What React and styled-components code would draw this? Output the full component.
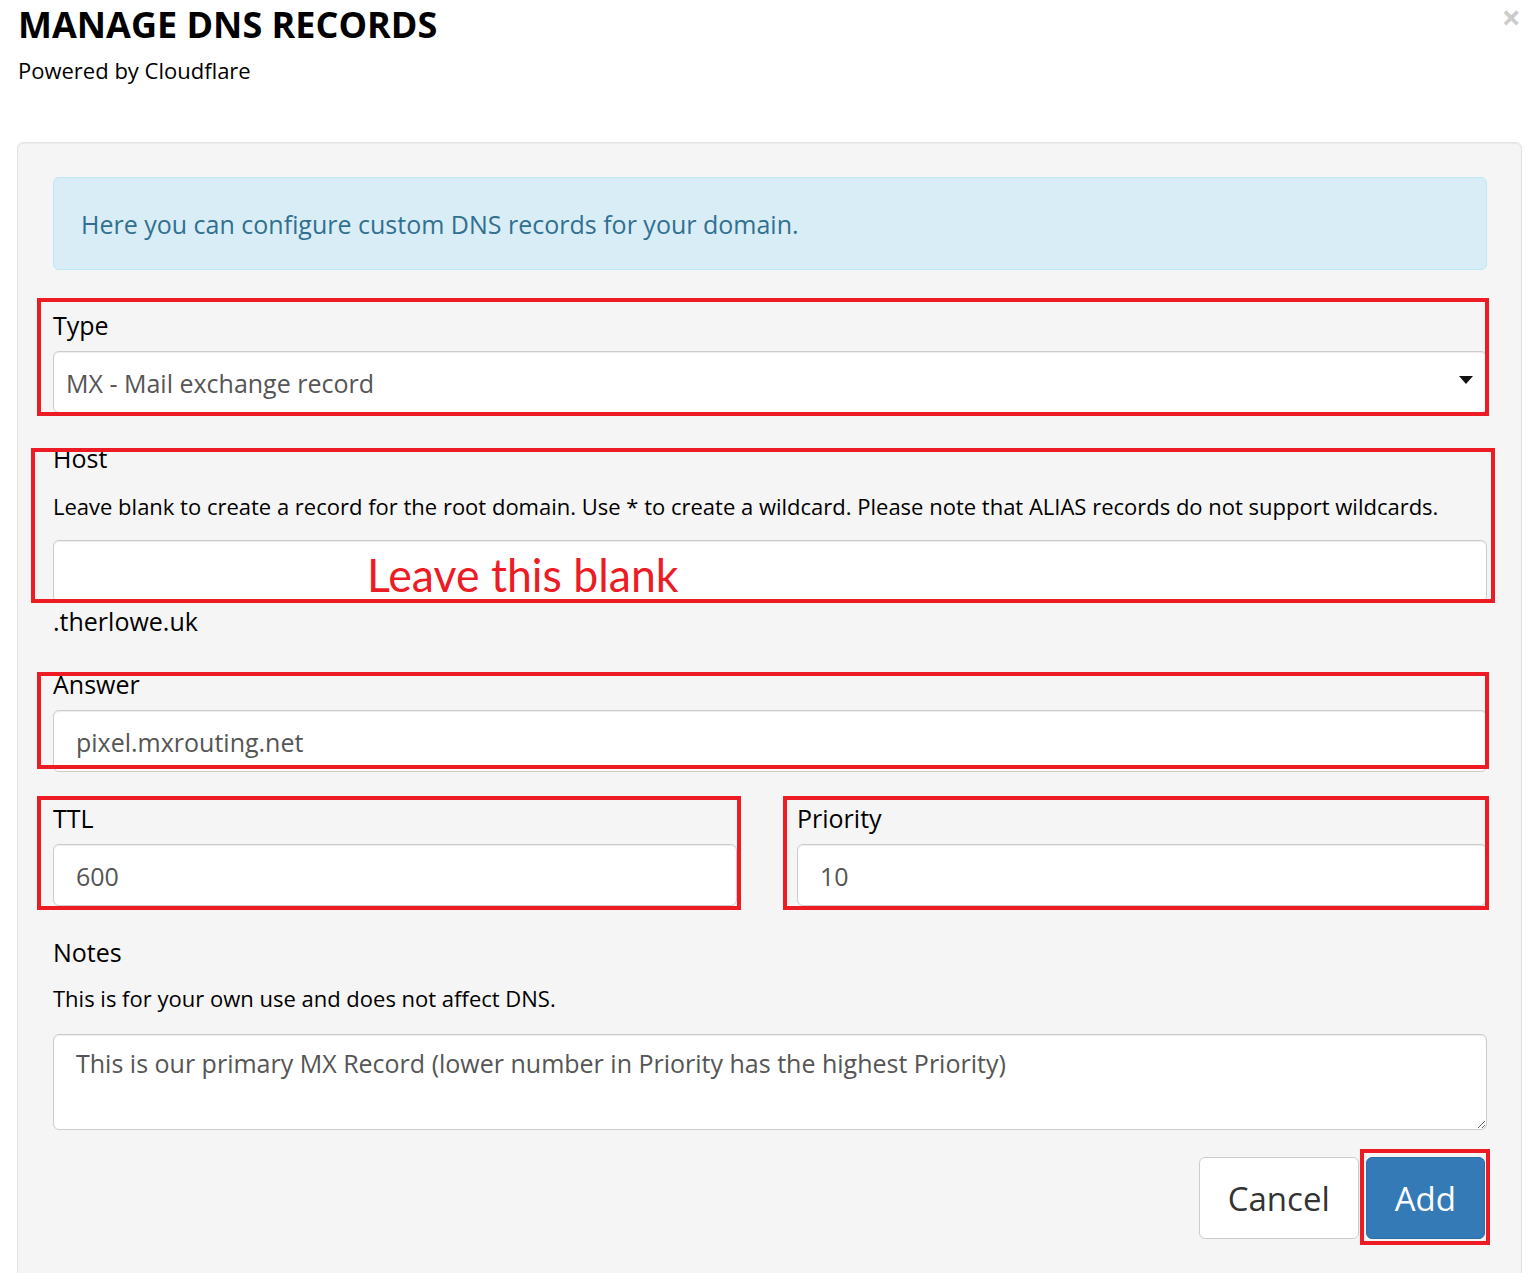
import React from "react";
import styled, { createGlobalStyle } from "styled-components";

const GlobalStyle = createGlobalStyle`
  html, body { margin: 0; padding: 0; background: #ffffff; }
  body { font-family: "Open Sans", "Noto Sans", sans-serif; color: #000; }
  *, *::before, *::after { box-sizing: border-box; }
`;

const Page = styled.div`
  width: 1526px;
  height: 1273px;
  overflow: hidden;
`;

const Header = styled.header`
  display: flex;
  justify-content: space-between;
  align-items: flex-start;
  height: 142px;
  padding: 0 5px 0 18px;
`;

const Title = styled.h1`
  margin: 0;
  padding-top: 2px;
  font-size: 36px;
  line-height: 46px;
  font-weight: 700;
  white-space: nowrap;
`;

const Subtitle = styled.p`
  margin: 7px 0 0;
  font-size: 22px;
  line-height: 30px;
`;

const CloseButton = styled.button`
  border: 0;
  background: none;
  padding: 0;
  margin-top: 0;
  font-family: inherit;
  font-size: 34px;
  font-weight: 700;
  line-height: 34px;
  color: #000;
  opacity: 0.2;
  cursor: pointer;
`;

const Well = styled.section`
  margin: 0 4px 0 17px;
  min-height: 1200px;
  background: #f5f5f5;
  border: 1px solid #e3e3e3;
  border-radius: 6px;
  box-shadow: inset 0 1px 1px rgba(0, 0, 0, 0.05);
  padding: 34px 34px 40px 35px;
`;

const Alert = styled.div`
  display: flex;
  align-items: center;
  height: 93px;
  margin-bottom: 39px;
  padding: 0 27px;
  background: #d9edf7;
  border: 1px solid #bce8f1;
  border-radius: 6px;
  color: #31708f;
  font-size: 25px;
`;

const FormGroup = styled.div`
  position: relative;
  margin-bottom: ${(p) => (p.$mb ?? 30)}px;
`;

const Label = styled.label`
  display: block;
  font-size: 25px;
  line-height: 32px;
  margin-bottom: ${(p) => (p.$mb ?? 10)}px;
`;

const Help = styled.p`
  margin: 0 0 ${(p) => (p.$mb ?? 19)}px;
  font-size: 22px;
  line-height: 30px;
`;

const fieldBase = `
  width: 100%;
  background: #fff;
  border: 1px solid #ccc;
  border-radius: 6px;
  box-shadow: inset 0 1px 1px rgba(0, 0, 0, 0.075);
  font-family: "Open Sans", "Noto Sans", sans-serif;
  font-size: 25px;
  color: #555;
`;

const Input = styled.input`
  ${fieldBase}
  display: block;
  height: 62px;
  padding: 2px 22px 0;
  outline: none;
`;

const SelectBox = styled.div`
  ${fieldBase}
  display: flex;
  align-items: center;
  justify-content: space-between;
  height: 62px;
  padding: 2px 13px 0 12px;
`;

const Caret = styled.svg`
  width: 14px;
  height: 8px;
  margin-top: -6px;
`;

const TextArea = styled.textarea`
  ${fieldBase}
  display: block;
  height: 96px;
  padding: 11px 22px;
  line-height: 34px;
  resize: vertical;
  outline: none;
`;

const FieldWrap = styled.div`
  position: relative;
`;

const Suffix = styled.div`
  margin-top: 3px;
  font-size: 25px;
  line-height: 32px;
`;

const Row = styled.div`
  display: grid;
  grid-template-columns: 684px 1fr;
  column-gap: 60px;
`;

const Actions = styled.div`
  display: flex;
  justify-content: flex-end;
  gap: 7px;
  padding-right: 2px;
`;

const Button = styled.button`
  position: relative;
  height: 82px;
  padding: 0 28px;
  border-radius: 6px;
  font-family: "Open Sans", "Noto Sans", sans-serif;
  font-size: 33px;
  line-height: 1;
  cursor: pointer;
  border: 1px solid ${(p) => (p.$primary ? "#2e6da4" : "#ccc")};
  background: ${(p) => (p.$primary ? "#337ab7" : "#fff")};
  color: ${(p) => (p.$primary ? "#fff" : "#333")};
`;

const ButtonSlot = styled.div`
  position: relative;
  display: flex;
`;

/* red highlight frames drawn over the form groups */
const Mark = styled.div`
  position: absolute;
  top: ${(p) => p.$t}px;
  left: ${(p) => p.$l}px;
  right: ${(p) => p.$r}px;
  bottom: ${(p) => p.$b}px;
  border: 4px solid #ed1c24;
  pointer-events: none;
`;

const Note = styled.span`
  position: absolute;
  left: 314px;
  top: 10px;
  font-family: Lato, "Open Sans", sans-serif;
  font-size: 46px;
  line-height: 50px;
  color: #ed1c24;
  transform: scaleX(0.97);
  transform-origin: left center;
  white-space: nowrap;
  pointer-events: none;
`;

export default function App() {
  return (
    <Page>
      <GlobalStyle />
      <Header>
        <div>
          <Title>MANAGE DNS RECORDS</Title>
          <Subtitle>Powered by Cloudflare</Subtitle>
        </div>
        <CloseButton aria-label="Close">×</CloseButton>
      </Header>

      <Well>
        <Alert>Here you can configure custom DNS records for your domain.</Alert>

        <FormGroup $mb={29}>
          <Label>Type</Label>
          <SelectBox>
            <span>MX - Mail exchange record</span>
            <Caret viewBox="0 0 14 8">
              <path d="M0 0 H14 L7 8 Z" fill="#111" />
            </Caret>
          </SelectBox>
          <Mark $t={-11} $l={-16} $r={-2} $b={-3} />
        </FormGroup>

        <FormGroup $mb={31}>
          <Label $mb={17}>Host</Label>
          <Help>
            Leave blank to create a record for the root domain. Use * to create a wildcard. Please
            note that ALIAS records do not support wildcards.
          </Help>
          <FieldWrap>
            <Input readOnly value="" />
            <Note>Leave this blank</Note>
          </FieldWrap>
          <Suffix>.therlowe.uk</Suffix>
          <Mark $t={6} $l={-22} $r={-8} $b={34} />
        </FormGroup>

        <FormGroup>
          <Label>Answer</Label>
          <Input readOnly value="pixel.mxrouting.net" />
          <Mark $t={4} $l={-16} $r={-2} $b={3} />
        </FormGroup>

        <Row>
          <FormGroup>
            <Label>TTL</Label>
            <Input readOnly value="600" />
            <Mark $t={-6} $l={-16} $r={-4} $b={-4} />
          </FormGroup>
          <FormGroup>
            <Label>Priority</Label>
            <Input readOnly value="10" />
            <Mark $t={-6} $l={-14} $r={-2} $b={-4} />
          </FormGroup>
        </Row>

        <FormGroup $mb={27}>
          <Label $mb={15}>Notes</Label>
          <Help $mb={21}>This is for your own use and does not affect DNS.</Help>
          <TextArea
            readOnly
            value="This is our primary MX Record (lower number in Priority has the highest Priority)"
          />
        </FormGroup>

        <Actions>
          <Button type="button">Cancel</Button>
          <ButtonSlot>
            <Button type="button" $primary>
              Add
            </Button>
            <Mark $t={-8} $l={-6} $r={-5} $b={-6} />
          </ButtonSlot>
        </Actions>
      </Well>
    </Page>
  );
}
